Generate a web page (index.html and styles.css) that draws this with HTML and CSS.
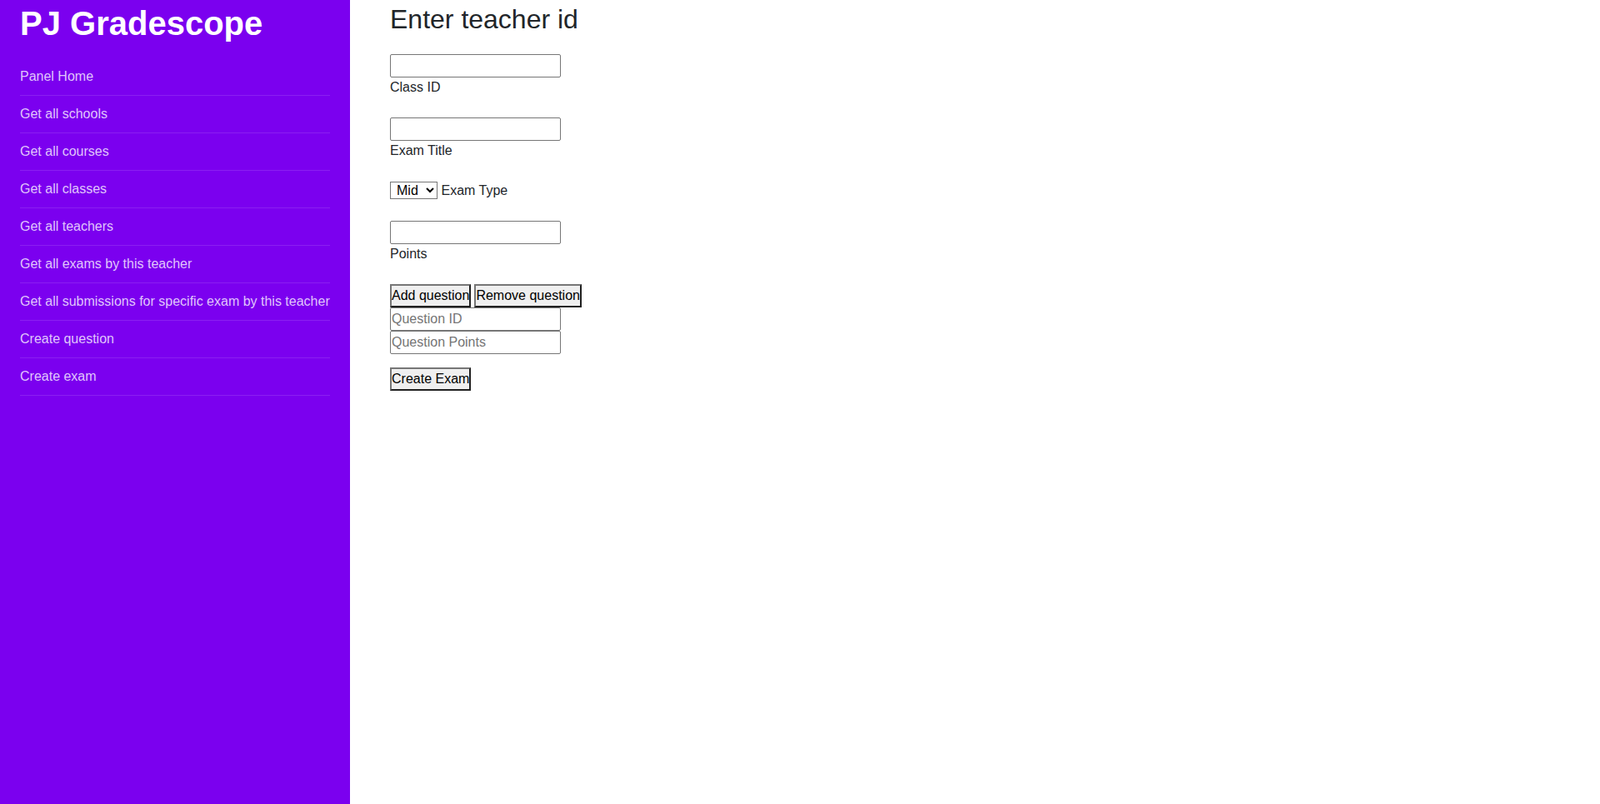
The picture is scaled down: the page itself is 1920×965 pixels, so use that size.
FILE: index.html
```html
<!DOCTYPE html>
<html lang="en">
<head>
<meta charset="utf-8">
<title>PJ Gradescope</title>
<link rel="stylesheet" href="styles.css">
</head>
<body>
<div class="layout">
  <aside class="sidebar">
    <h1 class="brand">PJ Gradescope</h1>
    <nav class="nav">
      <a class="nav-link" href="#">Panel Home</a>
      <a class="nav-link" href="#">Get all schools</a>
      <a class="nav-link" href="#">Get all courses</a>
      <a class="nav-link" href="#">Get all classes</a>
      <a class="nav-link" href="#">Get all teachers</a>
      <a class="nav-link" href="#">Get all exams by this teacher</a>
      <a class="nav-link" href="#">Get all submissions for specific exam by this teacher</a>
      <a class="nav-link" href="#">Create question</a>
      <a class="nav-link" href="#">Create exam</a>
    </nav>
  </aside>
  <main class="main">
    <h2 class="title">Enter teacher id</h2>
    <form class="form">
      <div class="form-group">
        <input class="text-input" type="text" id="classId">
        <label class="label" for="classId">Class ID</label>
      </div>
      <div class="form-group">
        <input class="text-input" type="text" id="examTitle">
        <label class="label" for="examTitle">Exam Title</label>
      </div>
      <div class="form-group">
        <select class="select" id="examType">
          <option>Mid</option>
          <option>Final</option>
        </select>
        <label class="label" for="examType">Exam Type</label>
      </div>
      <div class="form-group">
        <input class="text-input" type="text" id="points">
        <label class="label" for="points">Points</label>
      </div>
      <div class="form-group">
        <div class="btn-row">
          <button class="btn" type="button">Add question</button>
          <button class="btn" type="button">Remove question</button>
        </div>
        <input class="text-input" type="text" placeholder="Question ID">
        <input class="text-input" type="text" placeholder="Question Points">
      </div>
      <button class="btn" type="button">Create Exam</button>
    </form>
  </main>
</div>
</body>
</html>
```

FILE: styles.css
```css
* { box-sizing: border-box; }
html, body { margin: 0; padding: 0; height: 100%; }
body {
  font-family: "Liberation Sans", Arial, sans-serif;
  font-size: 16px;
  line-height: 1.5;
  color: #212529;
  background: #fff;
}
.layout {
  display: flex;
  min-height: 965px;
}
.sidebar {
  width: 420px;
  flex: 0 0 420px;
  background: #7b00ef;
  padding: 4px 24px 0;
}
.brand {
  margin: 0 0 18px;
  font-size: 40px;
  line-height: 1.2;
  font-weight: 700;
  color: #fff;
}
.nav {
  display: flex;
  flex-direction: column;
}
.nav-link {
  display: block;
  padding: 10px 0;
  border-bottom: 1px solid rgba(255, 255, 255, 0.12);
  color: rgba(255, 255, 255, 0.78);
  text-decoration: none;
  white-space: nowrap;
}
.main {
  flex: 1;
  padding: 4px 48px 0;
}
.title {
  margin: 0 0 23px;
  font-size: 32px;
  line-height: 1.2;
  font-weight: 400;
  color: #212529;
}
.form { margin: 0; }
.form-group { margin-bottom: 16px; }
.label {
  display: inline-block;
  margin-bottom: 8px;
}
.text-input {
  display: block;
  width: 205px;
  height: 28px;
  margin: 0;
  padding: 1px 1px;
  font: inherit;
  line-height: 24px;
  color: #000;
  background: #fff;
  border: 1px solid #767676;
  border-radius: 2px;
  outline: none;
}
.text-input::placeholder { color: #757575; }
.select {
  width: 57px;
  height: 21px;
  margin: 0;
  padding: 0 0 0 3px;
  font-family: inherit;
  font-size: 16px;
  color: #000;
  background: #fff;
  border: 1px solid #767676;
  border-radius: 0;
  vertical-align: baseline;
}
.btn-row {
  display: flex;
  gap: 4px;
}
.btn {
  margin: 0;
  padding: 0;
  height: 28px;
  font: inherit;
  font-size: 16px;
  line-height: 24px;
  color: #000;
  background: #efefef;
  border-width: 2px;
  border-style: solid;
  border-color: #767676 #1f1f1f #1f1f1f #767676;
  border-radius: 0;
  cursor: pointer;
}
```
